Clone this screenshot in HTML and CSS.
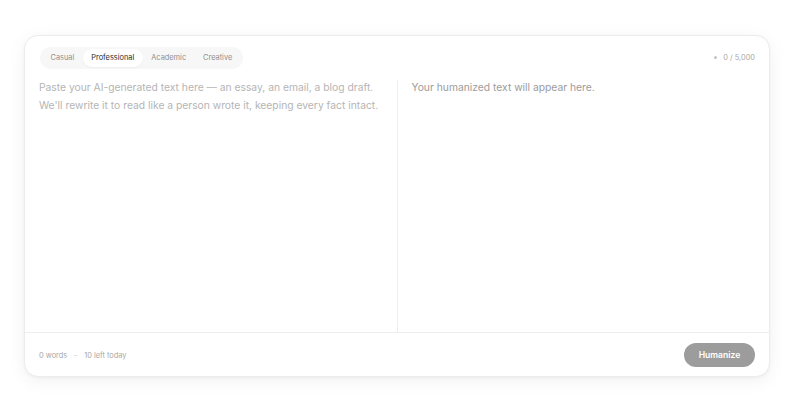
FILE: index.html
```html
<!DOCTYPE html>
<html lang="en">
<head>
<meta charset="utf-8">
<link rel="stylesheet" href="styles.css">
</head>
<body>
<div class="page">
  <div class="card">
    <div class="header">
      <div class="tabs">
        <span class="tab">Casual</span>
        <span class="tab active">Professional</span>
        <span class="tab">Academic</span>
        <span class="tab">Creative</span>
      </div>
      <div class="counter"><span class="dot"></span>0 / 5,000</div>
    </div>
    <div class="panes">
      <div class="pane left">
        <p class="input-ph">Paste your AI-generated text here — an essay, an email, a blog draft. We'll rewrite it to read like a person wrote it, keeping every fact intact.</p>
      </div>
      <div class="pane right">
        <p class="output-ph">Your humanized text will appear here.</p>
      </div>
    </div>
    <div class="footer">
      <div class="stats">
        <span>0 words</span>
        <span class="sep"></span>
        <span>10 left today</span>
      </div>
      <button class="btn">Humanize</button>
    </div>
  </div>
</div>
</body>
</html>
```

FILE: styles.css
```css
* { box-sizing: border-box; }
html, body { margin: 0; padding: 0; background: #fff; }
body {
  font-family: Inter, "Noto Sans", sans-serif;
  width: 800px;
  height: 402px;
  overflow: hidden;
}
.page {
  padding: 35px 30px 25px 24px;
}
.card {
  width: 746px;
  height: 342px;
  background: #fff;
  border: 1px solid #ececec;
  border-radius: 14px;
  box-shadow: 0 4px 18px rgba(0,0,0,0.06), 0 1px 3px rgba(0,0,0,0.04);
  display: flex;
  flex-direction: column;
}
.header {
  display: flex;
  align-items: center;
  justify-content: space-between;
  padding: 1px 14px 0 15px;
  height: 42px;
}
.tabs {
  display: flex;
  background: #f7f7f7;
  border-radius: 11px;
  padding: 2px;
  height: 22px;
}
.tab {
  font-size: 7.4px;
  color: #8f8f8f;
  padding: 0 8.5px;
  display: flex;
  align-items: center;
  border-radius: 9px;
}
.tab.active {
  background: #fff;
  color: #2a2a2a;
  box-shadow: 0 1px 2px rgba(0,0,0,0.04);
}
.counter {
  font-size: 7.4px;
  color: #a8a8a8;
  display: flex;
  align-items: center;
  gap: 6px;
}
.dot {
  width: 3px;
  height: 3px;
  border-radius: 50%;
  background: #c4c4c4;
}
.panes {
  flex: 1;
  display: flex;
}
.pane {
  flex: 1;
  padding: 0 12px 0 14px;
}
.pane.left {
  border-right: 1px solid #eeeeee;
  margin-top: 2px;
}
.pane.right {
  margin-top: 2px;
}
.input-ph {
  margin: -2px 0 0;
  font-size: 10.3px;
  line-height: 18px;
  color: #b5b5b5;
}
.output-ph {
  margin: -2px 0 0;
  font-size: 10.3px;
  line-height: 18px;
  color: #9c9c9c;
}
.footer {
  height: 44px;
  border-top: 1px solid #eeeeee;
  display: flex;
  align-items: center;
  justify-content: space-between;
  padding: 1px 14px 0 14px;
}
.stats {
  display: flex;
  align-items: center;
  gap: 7px;
  font-size: 7.4px;
  color: #a8a8a8;
}
.sep {
  width: 3px;
  height: 1px;
  background: #e0e0e0;
}
.btn {
  font-family: Inter, "Noto Sans", sans-serif;
  font-size: 8.6px;
  font-weight: 600;
  color: #fff;
  background: #9c9c9c;
  border: none;
  border-radius: 12px;
  height: 24px;
  width: 71px;
  padding: 0;
}
```
